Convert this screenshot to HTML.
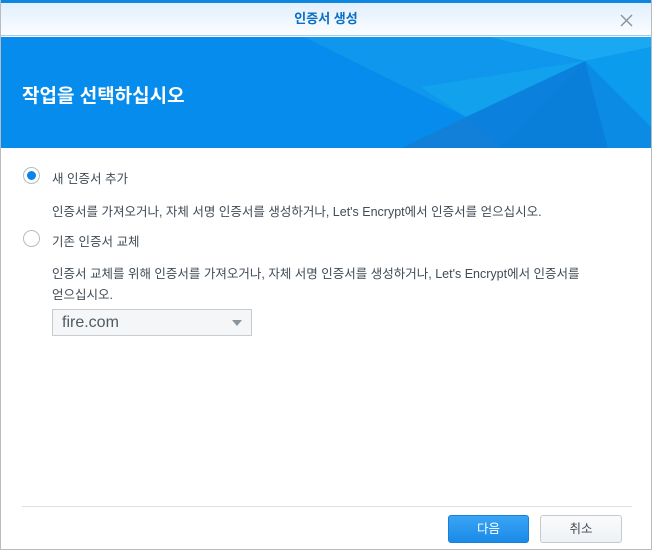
<!DOCTYPE html>
<html><head><meta charset="utf-8"><style>
*{margin:0;padding:0;box-sizing:border-box}
body{width:652px;height:550px;overflow:hidden;background:#fff;font-family:"Liberation Sans","Noto Sans CJK KR",sans-serif;position:relative}
.frame{position:absolute;inset:0;border:1px solid #b8bcc0;border-top:none}
.topline{position:absolute;left:0;top:0;width:652px;height:3px;background:#0d86e0}
.title{position:absolute;left:1px;top:3px;width:650px;height:33px;background:linear-gradient(#e1effd,#fbfdff);border-bottom:1px solid #9fcdf2;text-align:center;line-height:32px;font-size:13px;color:#0a6fc4;font-weight:bold}
.close{position:absolute;right:18px;top:11px}
.banner{position:absolute;left:1px;top:37px;width:650px;height:111px;background:#0a8ae8;overflow:hidden}
.banner h1{position:absolute;left:21px;top:44px;font-size:19px;color:#fff;font-weight:bold}
.t{position:absolute;font-size:12.5px;color:#414b55;white-space:nowrap}
.radio{position:absolute;width:17px;height:17px;border-radius:50%;border:1px solid #b5bcc4;background:#fff}
.radio.on::after{content:"";position:absolute;left:3px;top:3px;width:9px;height:9px;border-radius:50%;background:#0a84ea}
.sel{position:absolute;left:52px;top:309px;width:200px;height:27px;border:1px solid #c7ccd2;background:#f4f6f8;font-size:16px;color:#505a64;padding-left:9px;line-height:25px}
.sel::after{content:"";position:absolute;right:9px;top:10px;border:5px solid transparent;border-top:6px solid #8b939b;border-bottom:none}
.sep{position:absolute;left:22px;top:506px;width:610px;height:1px;background:#dde1e5}
.btn{position:absolute;top:515px;height:28px;border-radius:3px;font-size:12.5px;text-align:center;line-height:26px}
</style></head><body>
<div class="topline"></div>
<div class="title">인증서 생성
<svg class="close" width="13" height="13" viewBox="0 0 13 13"><path d="M1 1L12 12M12 1L1 12" stroke="#8a9198" stroke-width="1.4"/></svg></div>
<div class="banner">
<svg width="650" height="111" style="position:absolute;left:0;top:0">
<rect width="650" height="111" fill="#058ced"/>
<polygon points="303,0 489,0 584,24 465,80" fill="#0e97ec"/>
<polygon points="489,0 650,0 650,10 584,24" fill="#1aa8f2"/>
<polygon points="584,24 650,10 650,90" fill="#0b9cee"/>
<polygon points="420,50 584,24 465,80" fill="#14a6ee" opacity=".7"/>
<polygon points="465,80 584,24 499,111" fill="#0b80dc"/>
<polygon points="465,80 499,111 401,111" fill="#127fd8"/>
<polygon points="584,24 607,111 499,111" fill="#0a7fda"/>
<polygon points="584,24 650,90 650,111 607,111" fill="#0b8be4"/>
</svg>
<h1>작업을 선택하십시오</h1></div>
<div class="radio on" style="left:23px;top:167px"></div>
<div class="t" style="left:52px;top:168px">새 인증서 추가</div>
<div class="t" style="left:52px;top:201px">인증서를 가져오거나, 자체 서명 인증서를 생성하거나, Let's Encrypt에서 인증서를 얻으십시오.</div>
<div class="radio" style="left:23px;top:230px"></div>
<div class="t" style="left:52px;top:231px">기존 인증서 교체</div>
<div class="t" style="left:52px;top:263px">인증서 교체를 위해 인증서를 가져오거나, 자체 서명 인증서를 생성하거나, Let's Encrypt에서 인증서를</div>
<div class="t" style="left:52px;top:284px">얻으십시오.</div>
<div class="sel">fire.com</div>
<div class="sep"></div>
<div class="btn" style="left:448px;width:81px;background:linear-gradient(#3aa5f5,#1a8ae8);border:1px solid #1a7fd6;color:#fff">다음</div>
<div class="btn" style="left:540px;width:82px;background:linear-gradient(#fafbfc,#eef1f4);border:1px solid #c4cad0;color:#414b55">취소</div>
<div class="frame"></div>
</body></html>
